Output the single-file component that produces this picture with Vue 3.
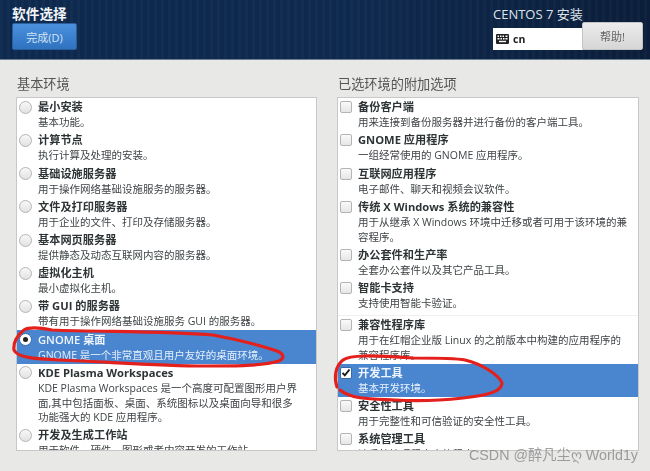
<script setup>
const baseEnvs = [
  { title: "最小安装", desc: "基本功能。" },
  { title: "计算节点", desc: "执行计算及处理的安装。" },
  { title: "基础设施服务器", desc: "用于操作网络基础设施服务的服务器。" },
  { title: "文件及打印服务器", desc: "用于企业的文件、打印及存储服务器。" },
  { title: "基本网页服务器", desc: "提供静态及动态互联网内容的服务器。" },
  { title: "虚拟化主机", desc: "最小虚拟化主机。" },
  { title: "带 GUI 的服务器", desc: "带有用于操作网络基础设施服务 GUI 的服务器。" },
  { title: "GNOME 桌面", desc: "GNOME 是一个非常直观且用户友好的桌面环境。", selected: true },
  {
    title: "KDE Plasma Workspaces",
    desc: "KDE Plasma Workspaces 是一个高度可配置图形用户界\n面,其中包括面板、桌面、系统图标以及桌面向导和很多\n功能强大的 KDE 应用程序。"
  },
  { title: "开发及生成工作站", desc: "用于软件、硬件、图形或者内容开发的工作站。" }
];

const addons = [
  { title: "备份客户端", desc: "用来连接到备份服务器并进行备份的客户端工具。" },
  { title: "GNOME 应用程序", desc: "一组经常使用的 GNOME 应用程序。" },
  { title: "互联网应用程序", desc: "电子邮件、聊天和视频会议软件。" },
  {
    title: "传统 X Windows 系统的兼容性",
    desc: "用于从继承 X Windows 环境中迁移或者可用于该环境的兼\n容程序。"
  },
  { title: "办公套件和生产率", desc: "全套办公套件以及其它产品工具。" },
  { title: "智能卡支持", desc: "支持使用智能卡验证。", separator: true },
  {
    title: "兼容性程序库",
    desc: "用于在红帽企业版 Linux 的之前版本中构建的应用程序的\n兼容程序库。"
  },
  { title: "开发工具", desc: "基本开发环境。", selected: true },
  { title: "安全性工具", desc: "用于完整性和可信验证的安全性工具。" },
  { title: "系统管理工具", desc: "该系统管理程序库的程序。" }
];
</script>

<template>
  <div class="app">
    <div class="content">
      <header class="header">
        <div class="header-left">
          <div class="page-title">软件选择</div>
          <button class="done-btn">完成(D)</button>
        </div>
        <div class="header-right">
          <div class="product">CENTOS 7 安装</div>
          <div class="header-controls">
            <div class="keyboard">
              <svg width="13" height="10" viewBox="0 0 13 10">
                <rect width="13" height="10" rx="1" fill="#222" />
                <g fill="#fff">
                  <rect x="1.5" y="1.5" width="1.5" height="1.5" />
                  <rect x="4" y="1.5" width="1.5" height="1.5" />
                  <rect x="6.5" y="1.5" width="1.5" height="1.5" />
                  <rect x="9.5" y="1.5" width="2" height="1.5" />
                  <rect x="1.5" y="4" width="2" height="1.5" />
                  <rect x="4.5" y="4" width="1.5" height="1.5" />
                  <rect x="7" y="4" width="1.5" height="1.5" />
                  <rect x="9.5" y="4" width="2" height="1.5" />
                  <rect x="3" y="6.8" width="7" height="1.4" />
                </g>
              </svg>
              <span>cn</span>
            </div>
            <button class="help-btn">帮助!</button>
          </div>
        </div>
      </header>

      <main class="columns">
        <section class="column">
          <h2 class="column-title">基本环境</h2>
          <div class="panel">
            <div v-for="env in baseEnvs" :key="env.title" class="item" :class="{ selected: env.selected }">
              <span class="radio" :class="{ on: env.selected }"></span>
              <div>
                <div class="item-title">{{ env.title }}</div>
                <div class="item-desc">{{ env.desc }}</div>
              </div>
            </div>
          </div>
        </section>

        <section class="column">
          <h2 class="column-title">已选环境的附加选项</h2>
          <div class="panel">
            <template v-for="addon in addons" :key="addon.title">
              <div class="item addon" :class="{ selected: addon.selected }">
                <span class="check">
                  <svg v-if="addon.selected" width="12" height="12" viewBox="0 0 12 12">
                    <path d="M1.8 5.8 L4.6 8.8 L10.2 1.8" fill="none" stroke="#1c1c1c" stroke-width="2.4" />
                  </svg>
                </span>
                <div>
                  <div class="item-title">{{ addon.title }}</div>
                  <div class="item-desc">{{ addon.desc }}</div>
                </div>
              </div>
              <div v-if="addon.separator" class="separator"></div>
            </template>
          </div>
        </section>
      </main>
    </div>

    <svg class="marks" width="650" height="471" viewBox="0 0 650 471">
      <path
        d="M24 330 C30 326 42 328 52 330 C100 332 165 331 213 335 C235 339 262 346 277 351 C284 354 285 358 279 361 C262 366 235 366 205 366 C160 366 110 362 60 360 C38 359 17 358 14 350 C13 343 17 335 24 330"
        fill="none" stroke="#e3201c" stroke-width="3.2" stroke-linecap="round" />
      <path
        d="M337 387 C334 378 335 366 343 360 C350 355 370 355 413 358 C435 358 455 358 465 360 C482 364 499 375 502 383 C502 391 490 395 463 398 C445 400 425 402 395 400 C375 399 352 400 340 390"
        fill="none" stroke="#e3201c" stroke-width="3.2" stroke-linecap="round" />
    </svg>
    <div class="watermark">CSDN @醉凡尘ღ World1y</div>
  </div>
</template>

<style scoped>
.app {
  position: relative;
  width: 650px;
  height: 471px;
  overflow: hidden;
  background: #e8e8e7;
  font-family: "Open Sans", "Noto Sans CJK SC", sans-serif;
  color: #2e3436;
}

.content {
  filter: blur(0.45px);
}

.header {
  height: 60px;
  box-sizing: border-box;
  display: flex;
  justify-content: space-between;
  padding: 6px 7px 0 12px;
  background:
    repeating-linear-gradient(90deg, rgba(255, 255, 255, 0.018) 0 3px, rgba(0, 0, 0, 0.03) 3px 7px),
    linear-gradient(90deg, #0e2a50 0%, #0f2a50 55%, #0b1f3b 100%);
  border-bottom: 1px solid #6d7f93;
}

.page-title {
  font-size: 13.7px;
  line-height: 16px;
  font-weight: 700;
  color: #f2f4f6;
}

.done-btn {
  display: block;
  width: 65px;
  height: 27px;
  margin-top: 1px;
  padding: 0;
  border: 1px solid #2a5f9e;
  border-radius: 2px;
  background: linear-gradient(#4a91dd, #2f72c0);
  color: #d5e4f5;
  font-family: inherit;
  font-size: 11px;
}

.header-right {
  display: flex;
  flex-direction: column;
  width: 150px;
}

.product {
  font-size: 13px;
  line-height: 16px;
  color: #dfe4ea;
}

.header-controls {
  display: flex;
  align-items: flex-end;
  height: 28px;
}

.keyboard {
  width: 90px;
  height: 22px;
  box-sizing: border-box;
  padding-left: 3px;
  display: flex;
  align-items: center;
  gap: 4px;
  background: #fff;
  color: #222;
  font-size: 10.5px;
  font-weight: 700;
}

.help-btn {
  width: 61px;
  height: 28px;
  margin-left: -1px;
  padding: 0;
  border: 1px solid #c4c4c4;
  border-radius: 2px;
  background: linear-gradient(#ececec, #d6d6d6);
  color: #666;
  font-family: inherit;
  font-size: 11px;
}

.columns {
  display: grid;
  grid-template-columns: 301px 302px;
  column-gap: 20px;
  padding: 14px 0 0 16px;
}

.column-title {
  margin: 0;
  padding: 0 0 2px 1px;
  font-size: 13.2px;
  font-weight: 400;
  line-height: 21px;
  color: #555;
}

.panel {
  height: 354px;
  box-sizing: border-box;
  overflow: hidden;
  background: #fff;
  border: 1px solid #c8c8c8;
}

.item {
  display: flex;
  align-items: flex-start;
  padding: 1.25px 0 1.25px 2px;
  gap: 6px;
}

.item.selected {
  background: #4a86cf;
  color: #eef4fb;
}

.item-title {
  font-size: 11.2px;
  line-height: 16px;
  font-weight: 700;
  white-space: nowrap;
}

.selected .item-title {
  font-weight: 600;
}

.item-desc {
  font-size: 10.5px;
  line-height: 14.7px;
  white-space: pre;
  color: #3f4446;
}

.selected .item-desc {
  color: #e6eff9;
}

.radio {
  flex: none;
  width: 13px;
  height: 13px;
  margin-top: 1.5px;
  box-sizing: border-box;
  border: 1px solid #b4b4b4;
  border-radius: 50%;
  background: linear-gradient(#f8f8f8, #e2e2e2);
  display: flex;
  align-items: center;
  justify-content: center;
}

.radio.on {
  background: #fff;
  border-color: #3a6ba8;
}

.radio.on::after {
  content: "";
  width: 5px;
  height: 5px;
  border-radius: 50%;
  background: #222;
}

.check {
  flex: none;
  width: 12px;
  height: 12px;
  margin-top: 2px;
  box-sizing: border-box;
  border: 1px solid #b4b4b4;
  border-radius: 2px;
  background: linear-gradient(#fafafa, #e6e6e6);
  display: flex;
  align-items: center;
  justify-content: center;
}

.selected .check {
  background: #fff;
  border-color: #3a6ba8;
}

.separator {
  height: 3.8px;
  border-bottom: 1px solid #f0f0f0;
  box-sizing: border-box;
}

/* hand drawn marks and the site stamp lie over the screenshot */
.marks {
  position: absolute;
  top: 0;
  left: 0;
}

.watermark {
  position: absolute;
  top: 446px;
  right: 12px;
  font-family: "Liberation Sans", "Noto Sans CJK SC", sans-serif;
  font-size: 14.3px;
  line-height: 18px;
  color: rgba(130, 130, 130, 0.75);
  white-space: nowrap;
}
</style>
